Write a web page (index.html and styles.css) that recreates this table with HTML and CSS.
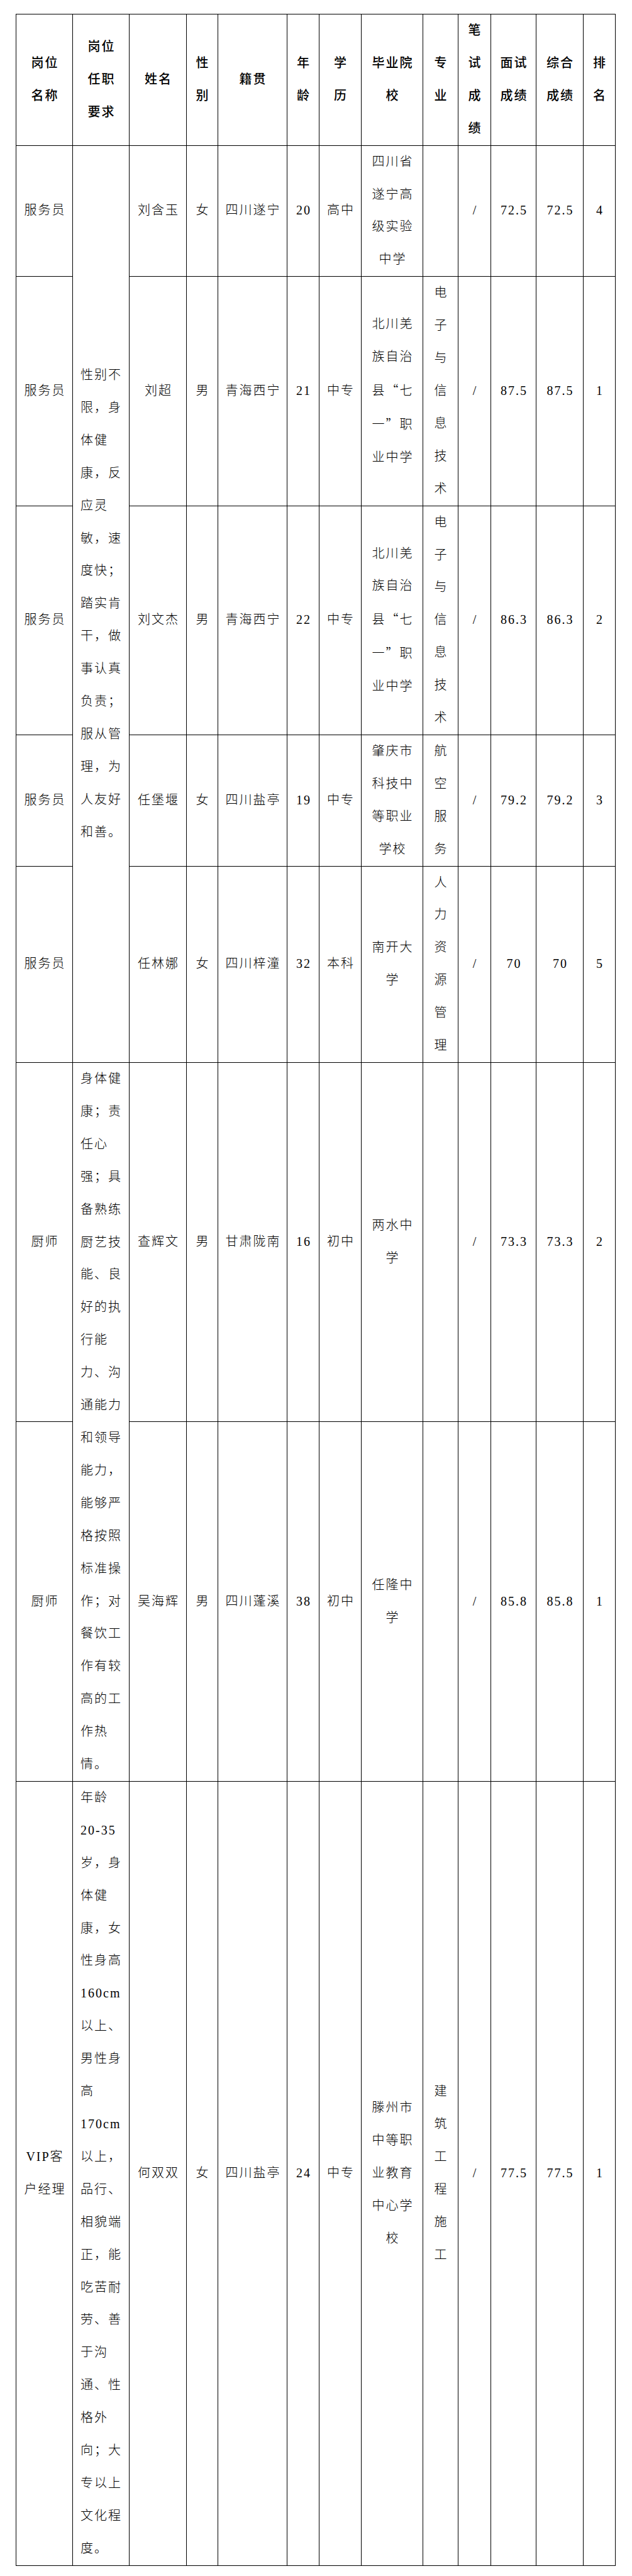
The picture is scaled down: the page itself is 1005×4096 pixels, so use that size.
FILE: index.html
```html
<!DOCTYPE html>
<html lang="zh-CN">
<head>
<meta charset="utf-8">
<title>面试成绩表</title>
<link rel="stylesheet" href="styles.css">
</head>
<body>
<table class="score-table">
  <colgroup>
    <col class="w-pos"><col class="w-req"><col class="w-name"><col class="w-sex"><col class="w-origin"><col class="w-age"><col class="w-edu"><col class="w-school"><col class="w-major"><col class="w-written"><col class="w-interview"><col class="w-total"><col class="w-rank">
  </colgroup>
  <thead>
    <tr>
      <th>岗位<br>名称</th>
      <th>岗位<br>任职<br>要求</th>
      <th>姓名</th>
      <th>性<br>别</th>
      <th>籍贯</th>
      <th>年<br>龄</th>
      <th>学<br>历</th>
      <th>毕业院<br>校</th>
      <th>专<br>业</th>
      <th>笔<br>试<br>成<br>绩</th>
      <th>面试<br>成绩</th>
      <th>综合<br>成绩</th>
      <th>排<br>名</th>
    </tr>
  </thead>
  <tbody>
    <tr>
      <td>服务员</td>
      <td rowspan="5" class="req">性别不<br>限，身<br>体健<br>康，反<br>应灵<br>敏，速<br>度快；<br>踏实肯<br>干，做<br>事认真<br>负责；<br>服从管<br>理，为<br>人友好<br>和善。</td>
      <td>刘含玉</td>
      <td>女</td>
      <td>四川遂宁</td>
      <td>20</td>
      <td>高中</td>
      <td>四川省<br>遂宁高<br>级实验<br>中学</td>
      <td></td>
      <td>/</td>
      <td>72.5</td>
      <td>72.5</td>
      <td>4</td>
    </tr>
    <tr>
      <td>服务员</td>
      <td>刘超</td>
      <td>男</td>
      <td>青海西宁</td>
      <td>21</td>
      <td>中专</td>
      <td>北川羌<br>族自治<br>县<span class="cjk">“</span>七<br>一<span class="cjk">”</span>职<br>业中学</td>
      <td>电<br>子<br>与<br>信<br>息<br>技<br>术</td>
      <td>/</td>
      <td>87.5</td>
      <td>87.5</td>
      <td>1</td>
    </tr>
    <tr>
      <td>服务员</td>
      <td>刘文杰</td>
      <td>男</td>
      <td>青海西宁</td>
      <td>22</td>
      <td>中专</td>
      <td>北川羌<br>族自治<br>县<span class="cjk">“</span>七<br>一<span class="cjk">”</span>职<br>业中学</td>
      <td>电<br>子<br>与<br>信<br>息<br>技<br>术</td>
      <td>/</td>
      <td>86.3</td>
      <td>86.3</td>
      <td>2</td>
    </tr>
    <tr>
      <td>服务员</td>
      <td>任堡堰</td>
      <td>女</td>
      <td>四川盐亭</td>
      <td>19</td>
      <td>中专</td>
      <td>肇庆市<br>科技中<br>等职业<br>学校</td>
      <td>航<br>空<br>服<br>务</td>
      <td>/</td>
      <td>79.2</td>
      <td>79.2</td>
      <td>3</td>
    </tr>
    <tr>
      <td>服务员</td>
      <td>任林娜</td>
      <td>女</td>
      <td>四川梓潼</td>
      <td>32</td>
      <td>本科</td>
      <td>南开大<br>学</td>
      <td>人<br>力<br>资<br>源<br>管<br>理</td>
      <td>/</td>
      <td>70</td>
      <td>70</td>
      <td>5</td>
    </tr>
    <tr class="row-chef">
      <td>厨师</td>
      <td rowspan="2" class="req">身体健<br>康；责<br>任心<br>强；具<br>备熟练<br>厨艺技<br>能、良<br>好的执<br>行能<br>力、沟<br>通能力<br>和领导<br>能力，<br>能够严<br>格按照<br>标准操<br>作；对<br>餐饮工<br>作有较<br>高的工<br>作热<br>情。</td>
      <td>查辉文</td>
      <td>男</td>
      <td>甘肃陇南</td>
      <td>16</td>
      <td>初中</td>
      <td>两水中<br>学</td>
      <td></td>
      <td>/</td>
      <td>73.3</td>
      <td>73.3</td>
      <td>2</td>
    </tr>
    <tr class="row-chef">
      <td>厨师</td>
      <td>吴海辉</td>
      <td>男</td>
      <td>四川蓬溪</td>
      <td>38</td>
      <td>初中</td>
      <td>任隆中<br>学</td>
      <td></td>
      <td>/</td>
      <td>85.8</td>
      <td>85.8</td>
      <td>1</td>
    </tr>
    <tr>
      <td>VIP客<br>户经理</td>
      <td class="req">年龄<br>20-35<br>岁，身<br>体健<br>康，女<br>性身高<br>160cm<br>以上、<br>男性身<br>高<br>170cm<br>以上，<br>品行、<br>相貌端<br>正，能<br>吃苦耐<br>劳、善<br>于沟<br>通、性<br>格外<br>向；大<br>专以上<br>文化程<br>度。</td>
      <td>何双双</td>
      <td>女</td>
      <td>四川盐亭</td>
      <td>24</td>
      <td>中专</td>
      <td>滕州市<br>中等职<br>业教育<br>中心学<br>校</td>
      <td>建<br>筑<br>工<br>程<br>施<br>工</td>
      <td>/</td>
      <td>77.5</td>
      <td>77.5</td>
      <td>1</td>
    </tr>
  </tbody>
</table>
</body>
</html>
```

FILE: styles.css
```css
html, body {
  margin: 0;
  padding: 0;
  background: #ffffff;
}

.score-table {
  border-collapse: collapse;
  table-layout: fixed;
  width: 953px;
  margin: 22px 0 0 25px;
  color: #000000;
  font-family: "Liberation Serif", "Noto Sans CJK SC", sans-serif;
  font-size: 20px;
}

.w-pos { width: 90px; }
.w-req { width: 90px; }
.w-name { width: 91px; }
.w-sex { width: 50px; }
.w-origin { width: 110px; }
.w-age { width: 51px; }
.w-edu { width: 67px; }
.w-school { width: 98px; }
.w-major { width: 56px; }
.w-written { width: 52px; }
.w-interview { width: 72px; }
.w-total { width: 75px; }
.w-rank { width: 51px; }

.score-table th,
.score-table td {
  border: 1px solid #000000;
  padding: 0 0 0 2px;
  text-align: center;
  vertical-align: middle;
  line-height: 51.9px;
  letter-spacing: 2px;
  white-space: nowrap;
  font-weight: 300;
}

.score-table th {
  font-weight: 500;
}

.score-table td.req {
  text-align: left;
  padding-left: 12px;
}

.cjk {
  font-family: "Noto Sans CJK SC", sans-serif;
}

.row-chef {
  height: 571px;
}
```
